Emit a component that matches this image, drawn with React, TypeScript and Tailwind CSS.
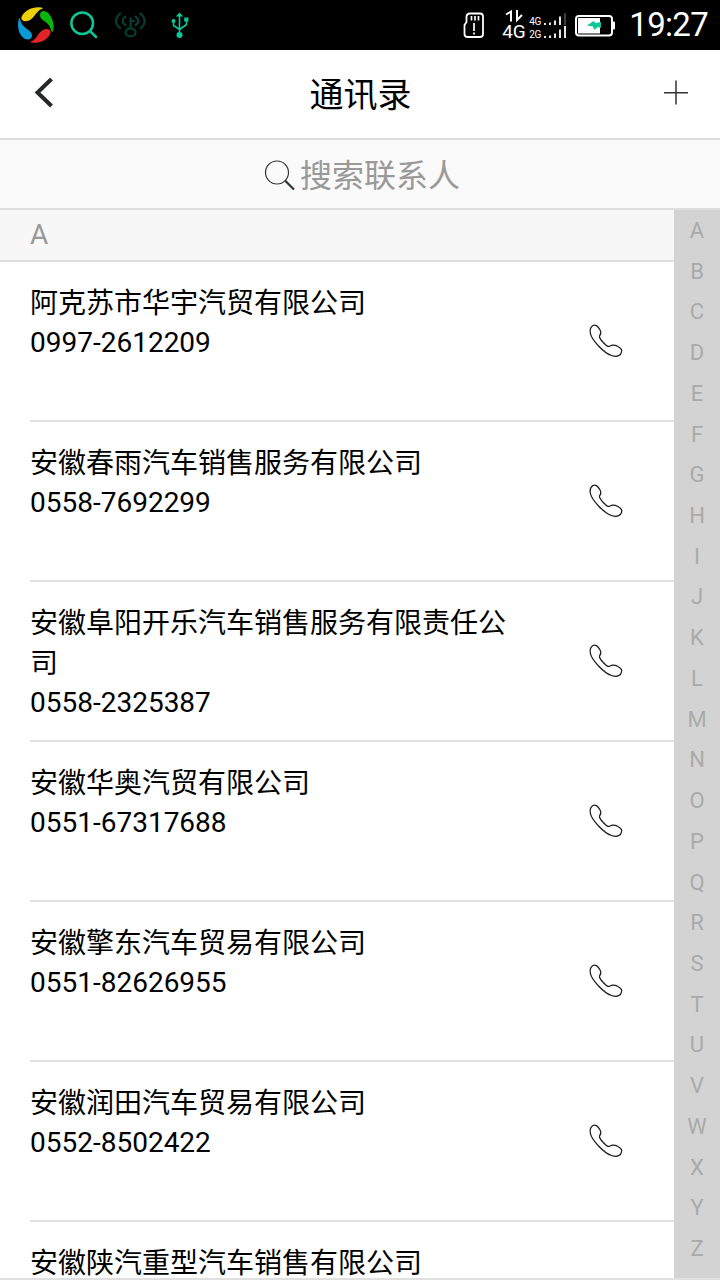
const contacts = [
  { name: "阿克苏市华宇汽贸有限公司", phone: "0997-2612209" },
  { name: "安徽春雨汽车销售服务有限公司", phone: "0558-7692299" },
  { name: "安徽阜阳开乐汽车销售服务有限责任公司", phone: "0558-2325387" },
  { name: "安徽华奥汽贸有限公司", phone: "0551-67317688" },
  { name: "安徽擎东汽车贸易有限公司", phone: "0551-82626955" },
  { name: "安徽润田汽车贸易有限公司", phone: "0552-8502422" },
  { name: "安徽陕汽重型汽车销售有限公司", phone: "" },
];

const letters = "ABCDEFGHIJKLMNOPQRSTUVWXYZ".split("");

function StatusBar() {
  return (
    <div className="flex h-[50px] shrink-0 items-center bg-black text-white">
      <svg className="ml-[18px]" width="36" height="36" viewBox="0 0 36 36">
        <path d="M3.5 10C6 4 13 0 21 .2C24 .3 25.500 1 24.500 1.700C20 3 18.500 6.500 15 10.500C11 15 6 15 4.200 13C3.300 12 3.200 11 3.500 10Z" fill="#ecd006" />
        <path d="M22 8C22 3.500 27 2.500 31 7C35 12 37 20 34.500 25C33 26 33.500 20 29 16C25 13 22 12 22 8Z" fill="#0ab50c" />
        <path d="M32.500 26C30 33 22 37 12.500 35.500C11.500 35 16 34 18.500 30C21 26 24 22.500 28 22C31.500 21.700 33 23.500 32.500 26Z" fill="#e02427" />
        <path d="M1 11.500C-1 18 0 26 5 30.500C9 34 14 32.500 14 28.500C14 24.500 9 22.500 5.500 19C2 15.500 2.500 10 1 11.500Z" fill="#079bd8" />
      </svg>
      <svg className="ml-[15px]" width="30" height="30" viewBox="0 0 30 30" fill="none" stroke="#0bc899" strokeWidth="2.5" strokeLinecap="round">
        <circle cx="13.2" cy="13.2" r="10.8" />
        <path d="M21 21L27 27" />
      </svg>
      <svg className="ml-[15px]" width="34" height="30" viewBox="0 0 34 30" fill="none" stroke="#043f32" strokeWidth="2.2" strokeLinecap="round">
        <path d="M6.2 3.500C.7 8.500.7 14.500 6.200 18.200M11.500 6.700C7.500 9.500 7.500 12.500 11.500 15M26.500 3.500C32 8.500 32 14.500 26.500 18.200M21.500 6.700C25.500 9.500 25.500 12.500 21.500 15" />
        <path d="M16.6 18V8M17 11H20" />
        <ellipse cx="16.6" cy="22.4" rx="5" ry="4" />
      </svg>
      <svg className="ml-[22px]" width="20" height="28" viewBox="0 0 20 28" fill="none" stroke="#0bc899" strokeWidth="1.6">
        <path d="M9.5 4V24M3.5 10V14.5L9.5 18.5M16.5 9V13.5L9.5 18.5" />
        <path d="M5.8 5.5L9.5 1.5L13.2 5.5Z" fill="#0bc899" stroke="none" />
        <circle cx="3.5" cy="10" r="2" fill="#0bc899" stroke="none" />
        <path d="M14.2 6.5H18.4V10.5H14.2Z" fill="#0bc899" stroke="none" />
        <circle cx="9.5" cy="24" r="3" fill="#0bc899" stroke="none" />
      </svg>
      <div className="ml-auto flex items-center">
        <svg width="22" height="28" viewBox="0 0 22 28" fill="none" stroke="#fff" strokeWidth="1.8">
          <path d="M7 2.500H17Q20 2.500 20 5.500V23Q20 26 17 26H4.500Q1.500 26 1.500 23V14L3.500 11V5.500Q4 2.500 7 2.500Z" />
          <path d="M8.500 5V9.500M12 5V9.500M15.500 5V9.500M11 12V20M11 21.500V23.500" strokeWidth="1.7" />
        </svg>
        <div className="ml-[17px] flex h-[32px] w-[27px] flex-col">
          <svg className="ml-[3px]" width="20" height="14" viewBox="0 0 20 14" fill="none" stroke="#fff" strokeWidth="2">
            <path d="M1 5.500L6 2.500V12.500M12 1V11L17 6" />
          </svg>
          <span className="text-[19px] leading-[18px] tracking-[-0.3px]">4G</span>
        </div>
        <div className="flex w-[13px] flex-col pt-[6px] text-[10px] leading-[13px] tracking-[-0.4px]">
          <span>4G</span>
          <span>2G</span>
        </div>
        <svg className="ml-[1px]" width="24" height="28" viewBox="0 0 24 28" fill="none" stroke="#fff" strokeWidth="1.8">
          <path d="M2 14V12M7 14V11.500M12 14V9.500M17 14V5.500M2 27V25M7 27V24.500M12 27V22.500M17 27V18.500M22 27V15" />
          <path d="M22 14V2" stroke="#444" />
        </svg>
        <svg className="ml-[8px]" width="42" height="24" viewBox="0 0 42 24">
          <rect x="1" y="3" width="36" height="19.500" rx="3" fill="none" stroke="#fff" strokeWidth="2" />
          <path d="M38 8.500H39Q40 8.500 40 9.500V15.500Q40 16.500 39 16.500H38Z" fill="#fff" />
          <path d="M3 5H25V20.500H3Z" fill="#fff" />
          <path d="M12 12.500L18.500 8L20.500 10L26 9V15L23 14L19 17L18 13.500Z" fill="#0bc899" />
        </svg>
        <span className="mr-[12px] ml-[12px] text-[33px] leading-[50px] tracking-[-0.7px]">19:27</span>
      </div>
    </div>
  );
}

function PhoneIcon() {
  return (
    <svg width="36" height="36" viewBox="0 0 36 36" fill="none" stroke="#1c1c1c" strokeWidth="1.3" strokeLinejoin="round">
      <path d="M5 2.500C7.800 1.200 9.500 2.800 11.700 6.300C13.700 9.800 13 11 11.700 12.500C10.700 14 11.500 15.500 15.500 19.700C19 23.200 19.800 24.200 22 23C24 21.700 27 22 30 23.500C33.500 25.400 34.700 27.500 33 30.500C31.500 33.200 28 34 23.500 32.500C16 30 3.500 17 2.300 10C1.600 6 2.500 4 5 2.500Z" />
    </svg>
  );
}

export default function App() {
  return (
    <div className="flex h-[1280px] w-[720px] flex-col overflow-hidden bg-white font-['Roboto','Noto_Sans_CJK_SC',sans-serif] text-black">
      <StatusBar />
      <header className="flex h-[90px] shrink-0 items-center justify-between border-b-2 border-[#dedede] pr-[31px] pl-[34px]">
        <svg width="24" height="32" viewBox="0 0 24 32" fill="none" stroke="#252827" strokeWidth="4">
          <path d="M17.500 1L3.500 14.500L17.500 28" />
        </svg>
        <h1 className="pt-[2px] text-[34px] leading-[50px]">通讯录</h1>
        <svg className="-mt-[2px]" width="26" height="26" viewBox="0 0 26 26" fill="none" stroke="#333" strokeWidth="1.5">
          <path d="M1 12.800H25M13 0.500V24.500" />
        </svg>
      </header>
      <div className="flex h-[70px] shrink-0 items-center justify-center border-b-2 border-[#dedede] bg-[#fafafa] pt-[3px] pl-[4px]">
        <svg className="mr-[4px]" width="32" height="32" viewBox="0 0 32 32" fill="none" stroke="#333">
          <circle cx="13" cy="12.500" r="11.500" strokeWidth="1.200" />
          <path d="M21 20.500L30 29.500" strokeWidth="2.200" />
        </svg>
        <span className="text-[32px] leading-[48px] text-[#999]">搜索联系人</span>
      </div>
      <div className="flex h-[1068px] shrink-0 overflow-hidden">
        <div className="flex-1">
          <div className="h-[52px] border-b-2 border-[#dedede] bg-[#f7f7f7] pl-[30px] text-[28px] leading-[50px] text-[#999]">A</div>
          {contacts.map((c) => (
            <div key={c.name} className="ml-[30px] flex h-[160px] items-center border-b-2 border-[#e0e0e0]">
              <div className="h-full w-[480px] pt-[22px] text-[28px] leading-[40px]">
                <p>{c.name}</p>
                <p className="-mt-px">{c.phone}</p>
              </div>
              <div className="ml-[78px]">
                <PhoneIcon />
              </div>
            </div>
          ))}
        </div>
        <div className="flex w-[46px] flex-col items-center bg-[#d3d3d3] pt-px text-[22px] text-[#aaa]">
          {letters.map((l) => (
            <span key={l} className="h-[40.72px] shrink-0 leading-[40.72px]">{l}</span>
          ))}
        </div>
      </div>
      <div className="h-[2px] shrink-0 bg-[#e0e0e0]" />
    </div>
  );
}
